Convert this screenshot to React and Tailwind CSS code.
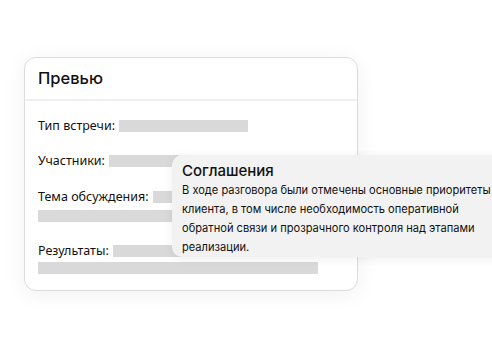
export default function App() {
  const bar = "bg-[#d9d9d9] h-[12px]";
  return (
    <div className="w-[492px] h-[352px] bg-white overflow-hidden relative" style={{ fontFamily: '"Noto Sans", sans-serif' }}>
      <div className="absolute left-[24px] top-[57px] w-[334px] h-[234px] rounded-[12px] border border-[#dcdcdc] bg-white shadow-[0_4px_24px_rgba(0,0,0,0.06)]">
        <div className="h-[43px] border-b-2 border-[#efefef] flex items-center px-[13px]">
          <span className="text-[16.5px] text-[#111] font-medium" style={{ fontFamily: 'Inter, sans-serif' }}>Превью</span>
        </div>
        <div className="px-[13px] pt-[15px] text-[12.5px] text-[#111] flex flex-col">
          <div className="flex items-center h-[20px]">
            <span>Тип встречи:</span>
            <div className={`${bar} ml-[4px] w-[129px]`} />
          </div>
          <div className="flex items-center h-[20px] mt-[15px]">
            <span>Участники:</span>
            <div className={`${bar} ml-[4px] w-[232px]`} />
          </div>
          <div className="flex items-center h-[20px] mt-[16px]">
            <span>Тема обсуждения:</span>
            <div className={`${bar} ml-[4px] w-[60px]`} />
          </div>
          <div className={`${bar} w-[260px] mt-[3px]`} />
          <div className="flex items-center h-[20px] mt-[19px]">
            <span>Результаты:</span>
            <div className={`${bar} ml-[4px] w-[180px]`} />
          </div>
          <div className={`${bar} w-[280px] mt-[1px]`} />
        </div>
      </div>
      <div className="absolute left-[172px] top-[155px] w-[340px] h-[102px] rounded-l-[10px] bg-[#f2f2f2] shadow-[0_2px_10px_rgba(0,0,0,0.07)] pl-[10px] pt-[6px] text-[#111]" style={{ fontFamily: 'Inter, sans-serif' }}>
        <div className="text-[15px] leading-[20px] font-medium">Соглашения</div>
        <div className="text-[11.1px] leading-[19px] mt-[0px]">
          В ходе разговора были отмечены основные приоритеты<br />
          клиента, в том числе необходимость оперативной<br />
          обратной связи и прозрачного контроля над этапами<br />
          реализации.
        </div>
      </div>
    </div>
  );
}
